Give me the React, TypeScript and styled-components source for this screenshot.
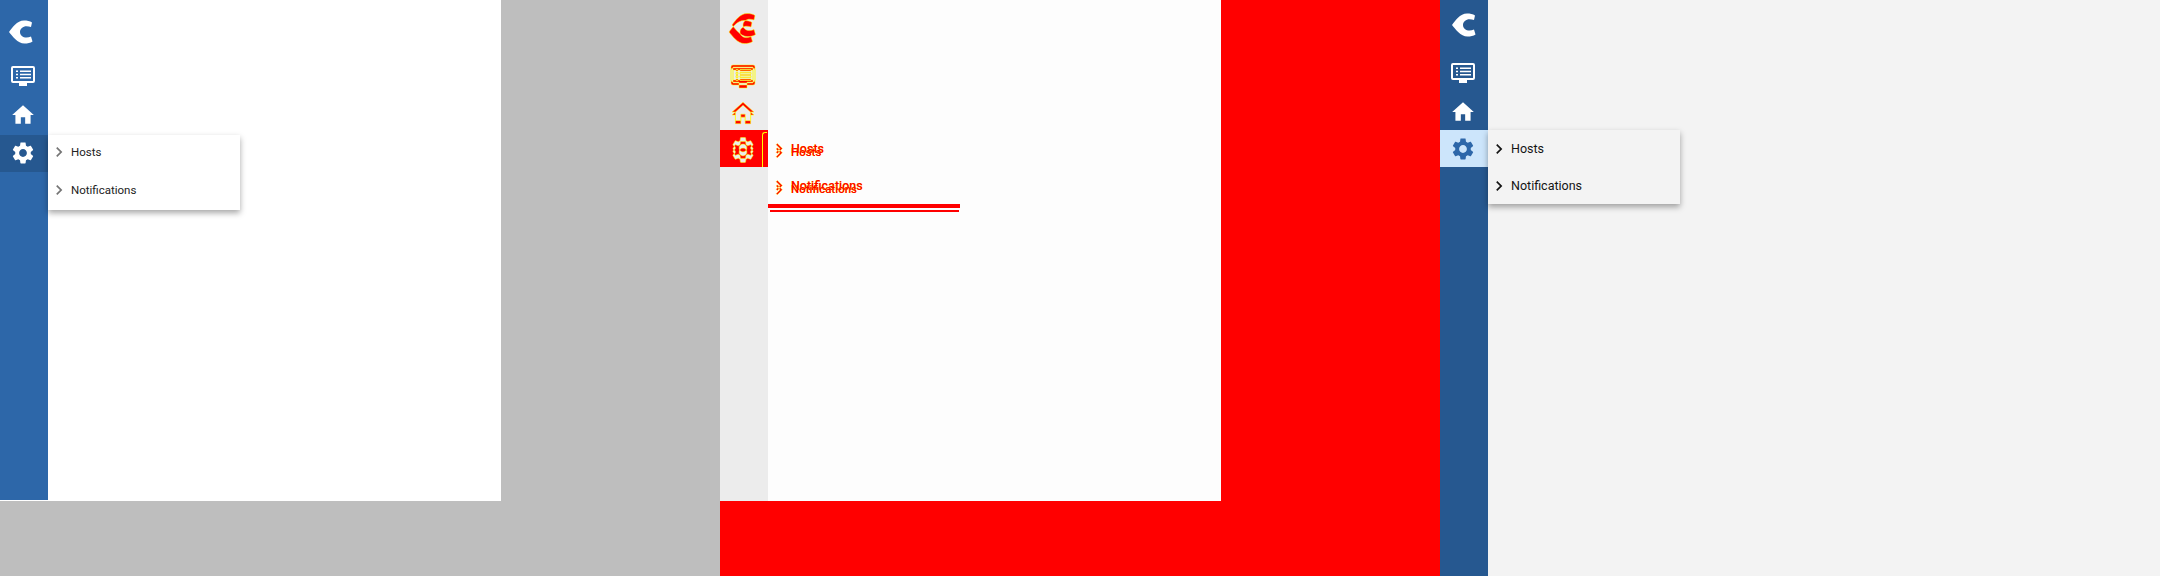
import styled, { createGlobalStyle } from 'styled-components';

const GlobalStyle = createGlobalStyle`
  body {
    margin: 0;
    font-family: Roboto, 'Noto Sans', sans-serif;
  }
`;

// every shape starts with an absolute move and is relative after it, so the
// diff panel can lay two copies into one even-odd path
const logo = (x: number, y: number) =>
  `M${x} ${y + 12}c3-4 8-11.5 15-11.5 3 0 6 .5 8 2l-1 4.500c-1.500-.5-3-.8-4.500-.8-3.500 0-6.500 2.500-6.500 5.800s3 5.600 6.500 5.600c1.500 0 3-.3 4.500-1l1.500 5c-2 1.500-5 2-8 2-7 0-12-7.600-15.500-11.600z`;
const monitor = (x: number, y: number) =>
  `M${x + 2} ${y}h20a2 2 0 0 1 2 2v13a2 2 0 0 1-2 2h-6v3h-8v-3h-6a2 2 0 0 1-2-2v-13a2 2 0 0 1 2-2zm0 2v13h20v-13zm3 2.500h2v1.600h-2zm4 0h11v1.600h-11zm-4 3.200h2v1.600h-2zm4 0h11v1.600h-11zm-4 3.200h2v1.600h-2zm4 0h11v1.600h-11z`;
const home = (x: number, y: number) =>
  `M${x + 10} ${y + 20}v-6h4v6h5v-8h3l-10-9-10 9h3v8z`;
const gear = (x: number, y: number) =>
  `M${x + 19.14} ${y + 12.94}c.04-.3.06-.61.06-.94 0-.32-.02-.64-.07-.94l2.03-1.58c.18-.14.23-.41.12-.61l-1.92-3.32c-.12-.22-.37-.29-.59-.22l-2.39.96c-.5-.38-1.03-.7-1.62-.94l-.36-2.54c-.04-.24-.24-.41-.48-.41h-3.84c-.24 0-.43.17-.47.41l-.36 2.54c-.59.24-1.13.57-1.62.94l-2.39-.96c-.22-.08-.47 0-.59.22l-1.91 3.32c-.12.21-.08.47.12.61l2.03 1.58c-.05.3-.09.63-.09.94s.02.64.07.94l-2.03 1.58c-.18.14-.23.41-.12.61l1.92 3.32c.12.22.37.29.59.22l2.39-.96c.5.38 1.03.7 1.62.94l.36 2.54c.05.24.24.41.48.41h3.84c.24 0 .44-.17.47-.41l.36-2.54c.59-.24 1.13-.56 1.62-.94l2.39.96c.22.08.47 0 .59-.22l1.92-3.32c.12-.22.07-.47-.12-.61l-2.01-1.58zm-7.140 2.660c-1.980 0-3.600-1.620-3.600-3.600s1.620-3.600 3.600-3.600 3.600 1.620 3.600 3.600-1.620 3.600-3.600 3.600z`;
const chevron = (x: number, y: number) =>
  `M${x + 8.59} ${y + 16.59}l4.580-4.590-4.580-4.590 1.410-1.410 6 6-6 6z`;

type Shape = (x: number, y: number) => string;

const Page = styled.div`
  display: flex;
  width: 2160px;
  height: 576px;
  overflow: hidden;
`;

const Panel = styled.section<{ $bg: string }>`
  width: 720px;
  height: 576px;
  flex: none;
  background: ${(p) => p.$bg};
`;

const Stage = styled.div<{ $w: number; $h: number; $bg: string }>`
  position: relative;
  display: flex;
  align-items: flex-start;
  width: ${(p) => p.$w}px;
  height: ${(p) => p.$h}px;
  background: ${(p) => p.$bg};
`;

const Sidebar = styled.nav<{ $h: number; $bg: string }>`
  display: flex;
  flex-direction: column;
  flex: none;
  width: 48px;
  height: ${(p) => p.$h}px;
  background: ${(p) => p.$bg};
`;

const LogoRow = styled.div<{ $h: number; $top: number; $left: number }>`
  flex: none;
  box-sizing: border-box;
  height: ${(p) => p.$h}px;
  padding: ${(p) => p.$top}px 0 0 ${(p) => p.$left}px;
  line-height: 0;
`;

const NavRow = styled.div<{ $h: number; $gap?: number; $bg?: string }>`
  display: flex;
  flex: none;
  align-items: center;
  justify-content: center;
  box-sizing: border-box;
  height: ${(p) => p.$h}px;
  padding: 0 2px ${(p) => p.$gap ?? 0}px 0;
  background: ${(p) => p.$bg ?? 'transparent'};
`;

const DiffRow = styled.div<{ $h: number; $active?: boolean }>`
  position: relative;
  flex: none;
  height: ${(p) => p.$h}px;
  line-height: 0;
  background: ${(p) => (p.$active ? '#ff0000' : 'transparent')};

  ${(p) =>
    p.$active &&
    `&::after {
      content: '';
      position: absolute;
      top: 2px;
      left: 42px;
      width: 5px;
      height: 35px;
      box-sizing: border-box;
      border-top: 1px solid #ffff00;
      border-left: 1px solid #ffff00;
      border-top-left-radius: 3px;
    }`}
`;

const Flyout = styled.div<{ $top: number; $bg: string; $raised?: boolean }>`
  position: absolute;
  top: ${(p) => p.$top}px;
  left: 48px;
  width: 192px;
  background: ${(p) => p.$bg};
  box-shadow: ${(p) => (p.$raised ? '0 3px 6px rgba(0, 0, 0, 0.35)' : 'none')};
`;

const Item = styled.div<{ $h: number; $pad?: number }>`
  position: relative;
  display: flex;
  align-items: center;
  gap: 2px;
  box-sizing: border-box;
  height: ${(p) => p.$h}px;
  padding: 0 0 ${(p) => p.$pad ?? 0}px 1px;
`;

const Label = styled.span<{ $size: number; $color: string }>`
  font-size: ${(p) => p.$size}px;
  color: ${(p) => p.$color};
`;

const DiffLabel = styled.span<{ $ghost?: boolean }>`
  font-size: ${(p) => (p.$ghost ? 11.5 : 12.5)}px;
  font-weight: 500;
  color: #ff0000;
  text-shadow: 0 0 0.5px #ffff00;

  ${(p) =>
    p.$ghost &&
    `position: absolute;
    top: 4px;
    left: 23px;
    line-height: 37px;`}
`;

const DiffBand = styled.div`
  height: 4px;
  background: #ff0000;
`;

const DiffLine = styled.div`
  height: 2px;
  margin: 2px 1px 0 2px;
  background: #ff0000;
`;

const Glyph = ({ shape, size, color, box = 24 }: { shape: Shape; size: number; color: string; box?: number }) => (
  <svg width={size} height={size} viewBox={`0 0 ${box} ${box}`} fill={color}>
    <path d={shape(0, 0)} fillRule="evenodd" />
  </svg>
);

// the picture where the two outer panels disagree: both copies in one even-odd path
const DiffGlyph = ({
  shape,
  w,
  h,
  scale = 1,
  a,
  b,
  fill = '#ff0000',
}: {
  shape: Shape;
  w: number;
  h: number;
  scale?: number;
  a: [number, number];
  b: [number, number];
  fill?: string;
}) => (
  <svg width={w} height={h} viewBox={`0 0 ${w / scale} ${h / scale}`} overflow="visible">
    <path
      d={shape(a[0] / scale, a[1] / scale) + shape(b[0] / scale, b[1] / scale)}
      fill={fill}
      fillRule="evenodd"
      stroke="#ffff00"
      strokeWidth={0.5}
    />
  </svg>
);

const ITEMS = ['Hosts', 'Notifications'];

const App = () => (
  <Page>
    <GlobalStyle />

    <Panel $bg="#bebebe">
      <Stage $w={501} $h={501} $bg="#ffffff">
        <Sidebar $h={500} $bg="#2d67a9">
          <LogoRow $h={60} $top={20} $left={9}>
            <Glyph shape={logo} size={24} color="#ffffff" />
          </LogoRow>
          <NavRow $h={36}>
            <Glyph shape={monitor} size={24} color="#ffffff" />
          </NavRow>
          <NavRow $h={39} $gap={2}>
            <Glyph shape={home} size={26} color="#ffffff" />
          </NavRow>
          <NavRow $h={37} $gap={2} $bg="#265890">
            <Glyph shape={gear} size={26} color="#ffffff" />
          </NavRow>
        </Sidebar>
        <Flyout $top={135} $bg="#ffffff" $raised>
          {ITEMS.map((name) => (
            <Item key={name} $h={37.5} $pad={3}>
              <Glyph shape={chevron} size={20} color="#757575" />
              <Label $size={11.5} $color="#222222">
                {name}
              </Label>
            </Item>
          ))}
        </Flyout>
      </Stage>
    </Panel>

    <Panel $bg="#ff0000">
      <Stage $w={501} $h={501} $bg="#fdfdfd">
        <Sidebar $h={501} $bg="#ececec">
          <DiffRow $h={56}>
            <DiffGlyph shape={logo} w={48} h={56} a={[9, 20]} b={[12, 13]} />
          </DiffRow>
          <DiffRow $h={37}>
            <DiffGlyph shape={monitor} w={48} h={37} a={[11, 12]} b={[11, 9]} />
          </DiffRow>
          <DiffRow $h={37}>
            <DiffGlyph shape={home} w={48} h={37} scale={26 / 24} a={[10, 9]} b={[10, 6]} />
          </DiffRow>
          <DiffRow $h={37} $active>
            <DiffGlyph shape={gear} w={48} h={37} scale={26 / 24} a={[10, 9]} b={[10, 5]} fill="#ececec" />
          </DiffRow>
        </Sidebar>
        <Flyout $top={130} $bg="#fdfdfd">
          {ITEMS.map((name) => (
            <Item key={name} $h={37}>
              <svg width={20} height={37} viewBox="0 0 24 44.4" overflow="visible">
                <path
                  d={chevron(0, 10.2) + chevron(0, 15.4)}
                  fill="#ff0000"
                  fillRule="evenodd"
                  stroke="#ffff00"
                  strokeWidth={0.5}
                />
              </svg>
              <DiffLabel>{name}</DiffLabel>
              <DiffLabel $ghost>{name}</DiffLabel>
            </Item>
          ))}
          <DiffBand />
          <DiffLine />
        </Flyout>
      </Stage>
    </Panel>

    <Panel $bg="#f3f3f3">
      <Stage $w={720} $h={576} $bg="#f3f3f3">
        <Sidebar $h={576} $bg="#265890">
          <LogoRow $h={56} $top={13} $left={12}>
            <Glyph shape={logo} size={24} color="#ffffff" />
          </LogoRow>
          <NavRow $h={37}>
            <Glyph shape={monitor} size={24} color="#ffffff" />
          </NavRow>
          <NavRow $h={37}>
            <Glyph shape={home} size={26} color="#ffffff" />
          </NavRow>
          <NavRow $h={37} $bg="#cce5fb">
            <Glyph shape={gear} size={26} color="#2d67a9" />
          </NavRow>
        </Sidebar>
        <Flyout $top={130} $bg="#f3f3f3" $raised>
          {ITEMS.map((name) => (
            <Item key={name} $h={37}>
              <Glyph shape={chevron} size={20} color="#141414" />
              <Label $size={12.5} $color="#141414">
                {name}
              </Label>
            </Item>
          ))}
        </Flyout>
      </Stage>
    </Panel>
  </Page>
);

export default App;
